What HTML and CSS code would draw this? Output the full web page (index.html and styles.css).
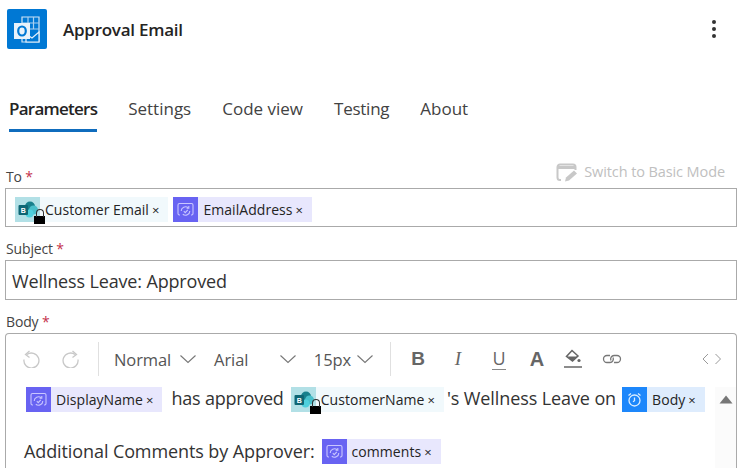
FILE: index.html
```html
<!DOCTYPE html>
<html lang="en">
<head>
<meta charset="utf-8">
<title>Approval Email</title>
<link rel="stylesheet" href="styles.css">
</head>
<body>
<div class="page">
  <header class="head">
    <div class="app-icon">
      <svg width="40" height="40" viewBox="0 0 40 40"><rect width="40" height="40" rx="2" fill="#0078d4"/><path d="M15 8h17v25H15z" fill="#0078d4" stroke="#cfe4f6" stroke-width="1.2"/><path d="M15 14h17M15 20h17M21 8v17M26.500 8v12" stroke="#a9d0ef" stroke-width="1.200" fill="none"/><path d="M19 25l6 4 7-6v10H19z" fill="#0078d4" stroke="#e6f1fb" stroke-width="1.200"/><rect x="7" y="14" width="16" height="16" fill="#e8f2fb"/><ellipse cx="15" cy="22" rx="3.800" ry="4.500" fill="none" stroke="#0078d4" stroke-width="2.200"/></svg>
    </div>
    <h1 class="title">Approval Email</h1>
    <div class="more"><i></i><i></i><i></i></div>
  </header>
  <nav class="tabs">
    <span class="tab active">Parameters</span>
    <span class="tab t2">Settings</span>
    <span class="tab t3">Code view</span>
    <span class="tab t4">Testing</span>
    <span class="tab t5">About</span>
  </nav>
  <div class="to-row">
    <span class="label to-label">To <b>*</b></span>
    <span class="switch">
      <svg width="22" height="22" viewBox="0 0 22 22"><path d="M5 19H4a2.500 2.500 0 0 1-2.500-2.500V6A2.500 2.500 0 0 1 4 3.500h13A2.500 2.500 0 0 1 19.500 6v3" fill="none" stroke="#c8c8c8" stroke-width="2"/><path d="M2 6.500h17" stroke="#c8c8c8" stroke-width="3"/><path d="M9 20.500l1-4 8-7 3 3-8 7z" fill="#c8c8c8"/></svg>
      Switch to Basic Mode
    </span>
  </div>
  <div class="field to-field">
    <span class="chip sp">
      <span class="chip-icon sp-icon"><svg width="25" height="25" viewBox="0 0 25 25"><circle cx="15" cy="9.500" r="5" fill="#17808c"/><circle cx="18.500" cy="13" r="4.500" fill="#48bfca"/><circle cx="14.500" cy="16.500" r="4" fill="#4fd0dc"/><rect x="3.500" y="8" width="9.500" height="10" rx="1" fill="#0e6674"/><text x="5.800" y="15.800" class="b-letter">B</text></svg></span>
      <span class="lock"><i></i></span>
      <span class="chip-text">Customer Email</span><span class="x">×</span>
    </span>
    <span class="chip flow">
      <span class="chip-icon flow-icon"><svg width="25" height="25" viewBox="0 0 25 25" fill="none" stroke="#c9c6ff" stroke-width="1.100"><path d="M7 18H6.500A1.500 1.500 0 0 1 5 16.500V8A1.500 1.500 0 0 1 6.500 6.500h12A1.500 1.500 0 0 1 20 8v8.500a1.500 1.500 0 0 1-1.500 1.500H18"/><path d="M8.200 14a4.300 4.300 0 0 1 7-3.300M16.800 14a4.300 4.300 0 0 1-7 3.300"/><path d="M10.800 14.200l1.400 1.400 2.600-2.800M15.800 9v2.200h-2.200"/></svg></span>
      <span class="chip-text">EmailAddress</span><span class="x">×</span>
    </span>
  </div>
  <span class="label sub-label">Subject <b>*</b></span>
  <div class="field subject">Wellness Leave: Approved</div>
  <span class="label body-label">Body <b>*</b></span>
  <div class="editor">
    <div class="toolbar">
      <svg class="undo" width="18" height="18" viewBox="0 0 18 18" fill="none" stroke="#c8c8c8" stroke-width="1.300"><path d="M5 4.500a7.500 7.500 0 1 1-3 5"/><path d="M7.500 1L3.500 4.500l4 3"/></svg>
      <svg class="redo" width="18" height="18" viewBox="0 0 18 18" fill="none" stroke="#c8c8c8" stroke-width="1.300"><path d="M13 4.500a7.500 7.500 0 1 0 3 5"/><path d="M10.500 1l4 3.500-4 3"/></svg>
      <span class="sep s1"></span>
      <span class="sel normal">Normal</span><svg class="chev c1" width="18" height="10" viewBox="0 0 18 10"><path d="M1.500 1.500L9 8.500l7.500-7" fill="none" stroke="#777" stroke-width="1.100"/></svg>
      <span class="sel arial">Arial</span><svg class="chev c2" width="18" height="10" viewBox="0 0 18 10"><path d="M1.500 1.500L9 8.500l7.500-7" fill="none" stroke="#777" stroke-width="1.100"/></svg>
      <span class="sel px">15px</span><svg class="chev c3" width="18" height="10" viewBox="0 0 18 10"><path d="M1.500 1.500L9 8.500l7.500-7" fill="none" stroke="#777" stroke-width="1.100"/></svg>
      <span class="sep s2"></span>
      <span class="tool bold">B</span>
      <span class="tool ital">I</span>
      <span class="tool under">U</span>
      <span class="tool color">A</span>
      <svg class="fill" width="20" height="20" viewBox="0 0 20 20"><path d="M9 1.500l6 5.500-5.500 5L3.500 7.500z" fill="none" stroke="#666" stroke-width="1.500"/><path d="M4 7.500h10.500L9.500 12z" fill="#666"/><circle cx="16" cy="11.500" r="1.600" fill="#666"/><path d="M1 18h18" stroke="#666" stroke-width="1.500"/></svg>
      <svg class="link" width="20" height="12" viewBox="0 0 20 12" fill="none" stroke="#777" stroke-width="1.300"><path d="M8 2.500H5a3.500 3.500 0 0 0 0 7h3a3.500 3.500 0 0 0 3-5"/><path d="M12 9.500h3a3.500 3.500 0 0 0 0-7h-3a3.500 3.500 0 0 0-3 5"/></svg>
      <svg class="code" width="20" height="12" viewBox="0 0 20 12" fill="none" stroke="#999" stroke-width="1"><path d="M6 1L1 6l5 5M13.500 1l5 5-5 5"/></svg>
    </div>
    <div class="content">
      <div class="line l1">
        <span class="chip flow">
          <span class="chip-icon flow-icon"><svg width="25" height="25" viewBox="0 0 25 25" fill="none" stroke="#c9c6ff" stroke-width="1.100"><path d="M7 18H6.500A1.500 1.500 0 0 1 5 16.500V8A1.500 1.500 0 0 1 6.500 6.500h12A1.500 1.500 0 0 1 20 8v8.500a1.500 1.500 0 0 1-1.500 1.500H18"/><path d="M8.200 14a4.300 4.300 0 0 1 7-3.300M16.800 14a4.300 4.300 0 0 1-7 3.300"/><path d="M10.800 14.200l1.400 1.400 2.600-2.800M15.800 9v2.200h-2.200"/></svg></span>
          <span class="chip-text">DisplayName</span><span class="x">×</span>
        </span>
        <span class="txt t-a">has approved</span>
        <span class="chip sp">
          <span class="chip-icon sp-icon"><svg width="25" height="25" viewBox="0 0 25 25"><circle cx="15" cy="9.500" r="5" fill="#17808c"/><circle cx="18.500" cy="13" r="4.500" fill="#48bfca"/><circle cx="14.500" cy="16.500" r="4" fill="#4fd0dc"/><rect x="3.500" y="8" width="9.500" height="10" rx="1" fill="#0e6674"/><text x="5.800" y="15.800" class="b-letter">B</text></svg></span>
          <span class="lock"><i></i></span>
          <span class="chip-text">CustomerName</span><span class="x">×</span>
        </span>
        <span class="txt t-b">'s Wellness Leave on</span>
        <span class="chip blue">
          <span class="chip-icon blue-icon"><svg width="25" height="25" viewBox="0 0 25 25" fill="none" stroke="#dceeff" stroke-width="1.300"><circle cx="12.500" cy="13.500" r="5.500"/><path d="M12.500 10.500v3.200l-1.500 1M6.500 8.500l2.500-2M18.500 8.500l-2.500-2"/></svg></span>
          <span class="chip-text">Body</span><span class="x">×</span>
        </span>
      </div>
      <div class="line l2">
        <span class="txt">Additional Comments by Approver:</span>
        <span class="chip flow">
          <span class="chip-icon flow-icon"><svg width="25" height="25" viewBox="0 0 25 25" fill="none" stroke="#c9c6ff" stroke-width="1.100"><path d="M7 18H6.500A1.500 1.500 0 0 1 5 16.500V8A1.500 1.500 0 0 1 6.500 6.500h12A1.500 1.500 0 0 1 20 8v8.500a1.500 1.500 0 0 1-1.500 1.500H18"/><path d="M8.200 14a4.300 4.300 0 0 1 7-3.300M16.800 14a4.300 4.300 0 0 1-7 3.300"/><path d="M10.800 14.200l1.400 1.400 2.600-2.800M15.800 9v2.200h-2.200"/></svg></span>
          <span class="chip-text">comments</span><span class="x">×</span>
        </span>
      </div>
      <div class="scroll"><svg width="14" height="9" viewBox="0 0 14 9"><path d="M7 0.500L13.500 8.500H0.500z" fill="#777"/></svg></div>
    </div>
  </div>
</div>
</body>
</html>
```
FILE: styles.css
```css
* { box-sizing: border-box; }
html, body { margin: 0; height: 100%; overflow: hidden; background: #fff; }
body { font-family: "Open Sans", "Noto Sans", "Liberation Sans", sans-serif; color: #242424; }
.page { width: 741px; height: 468px; overflow: hidden; padding: 0 4px 0 5px; }
.head { display: flex; align-items: center; height: 40px; margin: 9px 0 0 2px; }
.app-icon { width: 40px; height: 40px; }
.app-icon svg { display: block; }
.title { margin: 0 0 0 16px; font-size: 17px; font-weight: 600; letter-spacing: -0.25px; flex: 1; color: #252423; }
.more { display: flex; flex-direction: column; gap: 3px; margin-right: 21px; }
.more i { width: 4px; height: 4px; border-radius: 50%; background: #333; }
.tabs { display: flex; height: 50px; margin: 33px 0 0 0; padding-left: 4px; font-size: 17px; letter-spacing: 0; }
.tab { color: #424242; line-height: 54px; }
.tab.active { color: #242424; font-weight: 600; border-bottom: 3px solid #0f6cbd; letter-spacing: -0.75px; }
.t2 { margin-left: 31px; }
.t3 { margin-left: 31px; }
.t4 { margin-left: 31px; }
.t4 { letter-spacing: -0.25px; }
.t5 { margin-left: 31px; }
.to-row { display: flex; justify-content: space-between; align-items: flex-end; height: 21px; margin-top: 35px; }
.label { font-size: 14px; color: #444; letter-spacing: -0.15px; display: block; line-height: 20px; padding-left: 1px; }
.label b { color: #c4314b; font-weight: 400; }
.to-label { padding-bottom: 1px; height: 21px; }
.switch { display: flex; align-items: center; gap: 6px; font-size: 14.500px; letter-spacing: -0.1px; color: #c0c0c0; margin-right: 12px; line-height: 20px; height: 26px; padding-bottom: 7px; }
.field { border: 1px solid #aaa; background: #fff; }
.to-field { display: flex; align-items: flex-start; gap: 5px; height: 39px; padding: 8px 0 0 9px; }
.chip { display: inline-flex; align-items: center; height: 25px; position: relative; font-size: 14px; letter-spacing: 0.05px; color: #242424; flex: none; }
.chip-icon { width: 25px; height: 25px; flex: none; display: block; }
.chip-icon svg { display: block; }
.chip-text { padding-left: 5px; }
.x { margin: 0 9px 0 3px; font-size: 13px; }
.sp { background: #f1f9fc; }
.sp-icon { background: #b2e0e6; }
.flow { background: #e8e7fd; }
.flow-icon { background: #6863f2; }
.blue { background: #deecfd; }
.blue-icon { background: #1d87fb; }
.b-letter { font: 700 7px "Liberation Sans", sans-serif; fill: #fff; }
.lock { position: absolute; left: 19px; top: 19px; width: 11px; height: 8px; background: #000; }
.lock i { position: absolute; left: 2px; top: -7px; width: 8px; height: 8px; border: 1px solid #333; border-bottom: 0; border-radius: 4px 4px 0 0; }
.sub-label { margin-top: 12px; height: 21px; }
.subject { height: 40px; line-height: 40px; font-size: 18px; letter-spacing: -0.15px; padding-left: 6px; color: #333; }
.body-label { margin-top: 12px; height: 21px; }
.editor { border: 1px solid #aaa; border-bottom: 0; border-radius: 4px 4px 0 0; height: 140px; }
.toolbar { display: flex; align-items: center; height: 53px; padding: 0 0 3px 16px; font-size: 16.500px; color: #555; letter-spacing: -0.1px; }
.redo { margin-left: 22px; }
.sep { width: 1px; height: 34px; background: #e0e0e0; flex: none; }
.s1 { margin: 0 15px 0 18px; }
.s2 { margin: 0 17px 0 16.500px; }
.c1 { margin-left: 7.500px; }
.arial { margin-left: 17.500px; }
.c2 { margin-left: 31px; }
.px { margin-left: 16.500px; }
.c3 { margin-left: 4.500px; }
.tool { width: 20px; text-align: center; color: #666; font-size: 19px; line-height: 24px; letter-spacing: 0; }
.bold { font-weight: 700; font-family: "Liberation Sans", sans-serif; }
.ital { margin-left: 20px; font-family: "Liberation Serif", serif; font-style: italic; font-weight: 400; }
.under { margin-left: 24px; font-size: 18px; font-weight: 400; border-bottom: 1.500px solid #888; line-height: 19px; height: 21px; width: 14px; }
.color { margin-left: 21px; font-weight: 700; font-family: "Liberation Sans", sans-serif; font-size: 20px; }
.fill { margin-left: 16px; }
.link { margin-left: 19px; }
.code { margin-left: 80px; }
.content { position: relative; padding-left: 6px; }
.line { display: flex; align-items: center; height: 25px; }
.l1 { padding-left: 14px; }
.l2 { padding-left: 12px; margin-top: 27px; }
.txt { font-size: 18px; letter-spacing: -0.1px; color: #333; line-height: 25px; }
.t-a { margin: -3px 7px 0 9px; letter-spacing: -0.2px; }
.t-b { margin: -3px 6px 0 3px; }
.l2 .chip { margin-left: 7px; }
.scroll { position: absolute; right: 0; top: 0; width: 21px; height: 90px; background: #fbfbfb; display: flex; justify-content: center; padding-top: 8px; }
```
